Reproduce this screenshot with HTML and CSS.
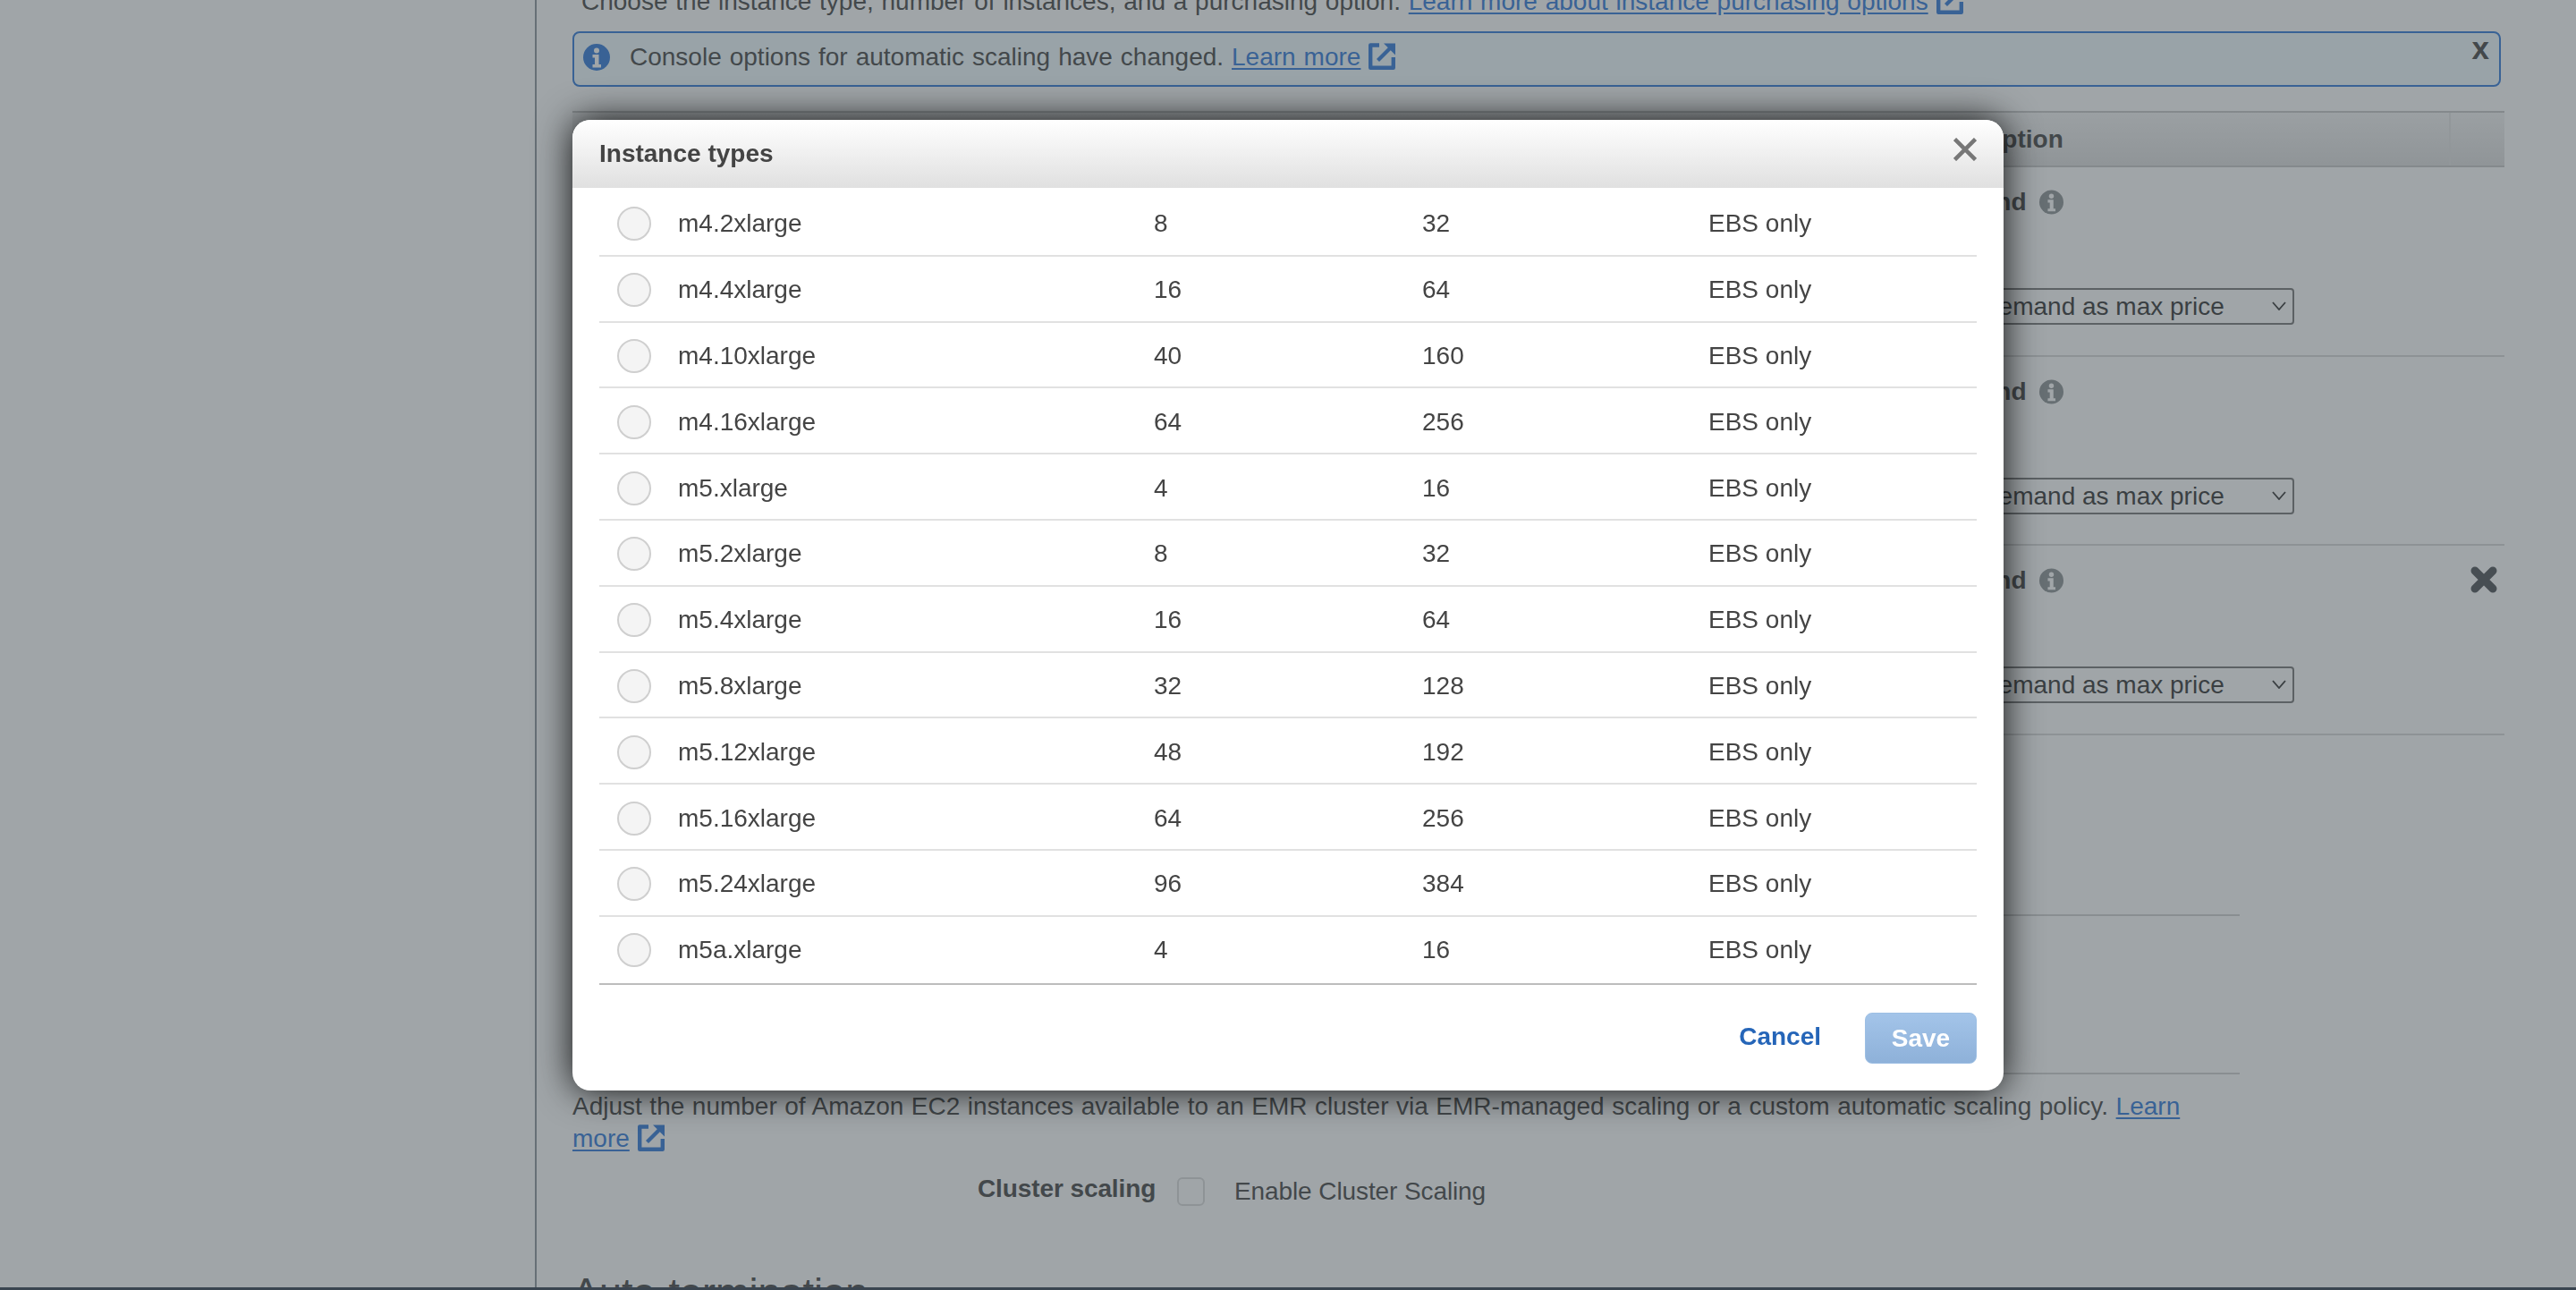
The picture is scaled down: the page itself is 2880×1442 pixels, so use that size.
FILE: index.html
```html
<!DOCTYPE html>
<html lang="en">
<head>
<meta charset="utf-8">
<title>Instance types</title>
<link rel="stylesheet" href="styles.css">
</head>
<body>
<svg class="defs" width="0" height="0" aria-hidden="true">
  <symbol id="ext" viewBox="0 0 30 30">
    <path d="M12 2.500H2.200v25.300h25.600V16" fill="none" stroke="currentColor" stroke-width="4.400" stroke-linejoin="round"/>
    <path d="M17 .5h13v13z" fill="currentColor"/>
    <path d="M10.500 19.500 24 6" fill="none" stroke="currentColor" stroke-width="4.200"/>
  </symbol>
  <symbol id="info" viewBox="0 0 30 30">
    <circle cx="15" cy="15" r="15" fill="currentColor"/>
    <circle cx="15" cy="7.500" r="3" fill="#fff"/>
    <path d="M10.500 12h7v11h2.500v3.500H10.500V23H13v-7.500h-2.500z" fill="#fff"/>
  </symbol>
</svg>

<div class="page">
  <aside class="sidebar"></aside>
  <main class="main">
    <p class="intro">Choose the instance type, number of instances, and a purchasing option. <a class="link" href="#">Learn more about instance purchasing options</a> <svg class="ext"><use href="#ext"/></svg></p>

    <div class="notice">
      <svg class="notice-icon"><use href="#info"/></svg>
      <span class="notice-text">Console options for automatic scaling have changed. <a class="link" href="#">Learn more</a> <svg class="ext"><use href="#ext"/></svg></span>
      <span class="notice-close">x</span>
    </div>

    <div class="fleet-head">
      <div class="fleet-head-cell">Purchasing option</div>
      <div class="fleet-head-end"></div>
    </div>

    <div class="fleet-row">
      <div class="fleet-cell">
        <div class="fleet-label">On-demand <svg class="mini-info"><use href="#info"/></svg></div>
        <div class="select">Use on-demand as max price<svg class="chev" viewBox="0 0 16 10"><path d="M1 1l7 8 7-8" fill="none" stroke="currentColor" stroke-width="1.800"/></svg></div>
      </div>
    </div>
    <div class="fleet-row">
      <div class="fleet-cell">
        <div class="fleet-label">On-demand <svg class="mini-info"><use href="#info"/></svg></div>
        <div class="select">Use on-demand as max price<svg class="chev" viewBox="0 0 16 10"><path d="M1 1l7 8 7-8" fill="none" stroke="currentColor" stroke-width="1.800"/></svg></div>
      </div>
    </div>
    <div class="fleet-row">
      <div class="fleet-cell">
        <div class="fleet-label">On-demand <svg class="mini-info"><use href="#info"/></svg></div>
        <div class="select">Use on-demand as max price<svg class="chev" viewBox="0 0 16 10"><path d="M1 1l7 8 7-8" fill="none" stroke="currentColor" stroke-width="1.800"/></svg></div>
      </div>
      <svg class="row-remove" viewBox="0 0 32 32"><path d="M6 6l20 20M26 6L6 26" fill="none" stroke="currentColor" stroke-width="9" stroke-linecap="round"/></svg>
    </div>

    <div class="rule rule-a"></div>
    <div class="rule rule-b"></div>

    <p class="scaling-text">Adjust the number of Amazon EC2 instances available to an EMR cluster via EMR-managed scaling or a custom automatic scaling policy. <a class="link" href="#">Learn more</a> <svg class="ext"><use href="#ext"/></svg></p>

    <div class="scaling-field">
      <span class="scaling-label">Cluster scaling</span>
      <span class="checkbox"></span>
      <span class="scaling-option">Enable Cluster Scaling</span>
    </div>

    <h2 class="section-title">Auto-termination</h2>
  </main>
</div>

<div class="overlay"></div>

<section class="modal">
  <header class="modal-head">
    <h3 class="modal-title">Instance types</h3>
    <svg class="modal-close" viewBox="0 0 26 26"><path d="M1.500 1.500l23 23M24.500 1.500l-23 23" fill="none" stroke="currentColor" stroke-width="4.500"/></svg>
  </header>
  <div class="modal-body">
    <div class="type-row"><span class="radio"></span><span class="c-name">m4.2xlarge</span><span class="c-cpu">8</span><span class="c-mem">32</span><span>EBS only</span></div>
    <div class="type-row"><span class="radio"></span><span class="c-name">m4.4xlarge</span><span class="c-cpu">16</span><span class="c-mem">64</span><span>EBS only</span></div>
    <div class="type-row"><span class="radio"></span><span class="c-name">m4.10xlarge</span><span class="c-cpu">40</span><span class="c-mem">160</span><span>EBS only</span></div>
    <div class="type-row"><span class="radio"></span><span class="c-name">m4.16xlarge</span><span class="c-cpu">64</span><span class="c-mem">256</span><span>EBS only</span></div>
    <div class="type-row"><span class="radio"></span><span class="c-name">m5.xlarge</span><span class="c-cpu">4</span><span class="c-mem">16</span><span>EBS only</span></div>
    <div class="type-row"><span class="radio"></span><span class="c-name">m5.2xlarge</span><span class="c-cpu">8</span><span class="c-mem">32</span><span>EBS only</span></div>
    <div class="type-row"><span class="radio"></span><span class="c-name">m5.4xlarge</span><span class="c-cpu">16</span><span class="c-mem">64</span><span>EBS only</span></div>
    <div class="type-row"><span class="radio"></span><span class="c-name">m5.8xlarge</span><span class="c-cpu">32</span><span class="c-mem">128</span><span>EBS only</span></div>
    <div class="type-row"><span class="radio"></span><span class="c-name">m5.12xlarge</span><span class="c-cpu">48</span><span class="c-mem">192</span><span>EBS only</span></div>
    <div class="type-row"><span class="radio"></span><span class="c-name">m5.16xlarge</span><span class="c-cpu">64</span><span class="c-mem">256</span><span>EBS only</span></div>
    <div class="type-row"><span class="radio"></span><span class="c-name">m5.24xlarge</span><span class="c-cpu">96</span><span class="c-mem">384</span><span>EBS only</span></div>
    <div class="type-row type-row-last"><span class="radio"></span><span class="c-name">m5a.xlarge</span><span class="c-cpu">4</span><span class="c-mem">16</span><span>EBS only</span></div>
  </div>
  <footer class="modal-foot">
    <a class="btn-cancel" href="#">Cancel</a>
    <span class="btn-save">Save</span>
  </footer>
</section>
</body>
</html>
```
FILE: styles.css
```css
* { box-sizing: border-box; }
html, body { margin: 0; height: 1442px; overflow: hidden; }
body { font: 28px/36px "Liberation Sans", Arial, sans-serif; color: #444; background: #fff; position: relative; }
.defs { position: absolute; }
p { margin: 0; }
.link { color: #3078d8; text-decoration: underline; text-underline-offset: 3px; }
.ext { width: 30px; height: 30px; color: #3078d8; vertical-align: -5px; margin-left: 1px; }

.page { display: flex; height: 1442px; border-bottom: 3px solid #323f4f; overflow: hidden; }
.sidebar { width: 600px; flex: none; border-right: 2px solid #8d949b; }
.main { width: 2200px; flex: none; padding: 0 0 0 40px; margin-top: -16px; word-spacing: 1px; }

.intro { padding-left: 10px; height: 36px; white-space: nowrap; }

.notice { position: relative; display: flex; align-items: center; gap: 22px; height: 62px; margin-top: 15px; padding: 0 0 5px 10px; border: 2px solid #3078d8; border-radius: 8px; background: #f0fbff; margin-right: 4px; }
.notice-icon { width: 30px; height: 30px; color: #3078d8; flex: none; }
.notice-text { word-spacing: 1.200px; }
.notice-text .ext { margin-left: 0; }
.notice-close { position: absolute; right: 11px; top: 1px; font-weight: bold; font-size: 35px; line-height: 32px; }

.fleet-head { display: flex; height: 63px; margin-top: 27px; background: linear-gradient(#f4f4f4, #dedede); border-top: 2px solid #c6c6c6; border-bottom: 2px solid #c6c6c6; font-weight: bold; }
.fleet-head-cell { width: 2100px; text-align: left; padding-left: 1420px; line-height: 59px; border-right: 2px solid #e2e2e2; white-space: nowrap; }
.fleet-head-end { flex: 1; }

.fleet-row { position: relative; height: 211.500px; border-bottom: 2px solid #d8d8d8; }
.fleet-cell { margin-left: 1470px; width: 455px; padding-top: 21px; }
.fleet-label { font-weight: bold; white-space: nowrap; display: flex; align-items: center; gap: 14px; height: 36px; }
.mini-info { width: 27px; height: 28px; color: #8c9294; flex: none; }
.select { display: flex; align-items: center; height: 41px; margin-top: 78px; border: 2px solid #777; border-radius: 4px; padding-left: 9px; position: relative; white-space: nowrap; line-height: 37px; color: #333; word-spacing: 0; }
.chev { position: absolute; right: 7px; top: 13px; width: 16px; height: 10px; color: #333; }
.row-remove { position: absolute; left: 2121px; top: 22px; width: 32px; height: 32px; color: #4c5054; }

.rule { height: 2px; background: #d0d0d0; width: 1864px; }
.rule-a { margin-top: 200px; }
.rule-b { margin-top: 175px; }

.scaling-text { width: 1864px; margin-top: 18px; word-spacing: 0.750px; }

.scaling-field { display: flex; align-items: center; height: 34px; margin-top: 24px; margin-left: 453px; word-spacing: 0; letter-spacing: -0.100px; }
.scaling-label { font-weight: bold; margin-top: -6px; width: 223px; white-space: nowrap; }
.checkbox { width: 31px; height: 32px; border: 2px solid #dadada; border-radius: 6px; background: #fff; flex: none; }
.scaling-option { margin-left: 33px; white-space: nowrap; }

.section-title { margin: 70px 0 0; font-size: 45px; line-height: 52px; font-weight: normal; white-space: nowrap; }

.overlay { position: fixed; inset: 0; background: rgba(66, 76, 82, 0.5); }

.modal { position: fixed; left: 640px; top: 134px; width: 1600px; height: 1085px; background: #fff; border-radius: 20px; box-shadow: 0 0 40px rgba(0, 0, 0, 0.9); overflow: hidden; }
.modal-head { position: relative; height: 76px; padding: 20px 30px 0; background: linear-gradient(#fff, #e0e0e0); }
.modal-title { margin: 0; font-size: 28px; line-height: 36px; font-weight: bold; color: #444; }
.modal-close { position: absolute; left: 1544px; top: 20px; width: 26px; height: 26px; color: #777; }
.modal-body { padding: 3px 30px 0; }
.type-row { display: flex; align-items: center; height: 73.800px; border-bottom: 2px solid #e1e1e1; padding: 3px 0 0 20px; }
.type-row-last { height: 76px; padding-top: 0; border-bottom-color: #bdbdbd; }
.radio { width: 38px; height: 38px; border: 2px solid #cfcfcf; border-radius: 50%; background: #f4f4f4; flex: none; }
.c-name { width: 532px; margin-left: 30px; }
.c-cpu { width: 300px; }
.c-mem { width: 320px; }
.modal-foot { display: flex; align-items: center; justify-content: flex-end; gap: 49px; padding: 31px 30px 0; }
.btn-cancel { color: #2565b8; font-weight: bold; text-decoration: none; margin-top: -3px; }
.btn-save { width: 125px; height: 57px; border: 1px solid #9dbfe4; border-radius: 8px; background: linear-gradient(#a3c4e9, #8eb1d9); color: #fff; font-weight: bold; text-align: center; line-height: 55px; }
```
